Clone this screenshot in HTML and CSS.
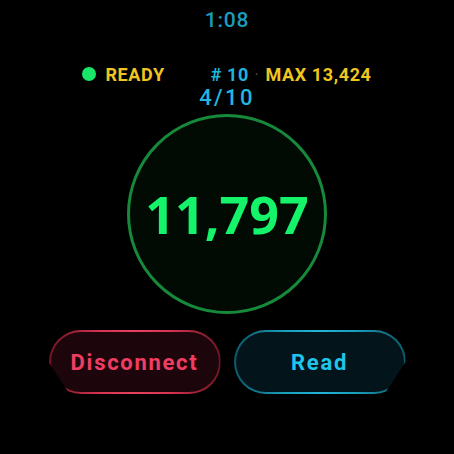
FILE: index.html
```html
<!DOCTYPE html>
<html>
<head>
<meta charset="utf-8">
<link rel="stylesheet" href="styles.css">
</head>
<body>
<div class="screen">
  <div class="time">1:08</div>
  <div class="status">
    <div class="group">
      <span class="dot"></span>
      <span class="ready">READY</span>
    </div>
    <div class="group right">
      <span class="num"># 10</span>
      <span class="sep">·</span>
      <span class="max">MAX 13,424</span>
    </div>
  </div>
  <div class="progress">4/10</div>
  <div class="ring">
    <span class="value">11,797</span>
  </div>
  <div class="actions">
    <button class="btn danger">Disconnect</button>
    <button class="btn primary">Read</button>
  </div>
</div>
</body>
</html>
```
FILE: styles.css
```css
html, body {
  margin: 0;
  padding: 0;
  background: #000;
}
.screen {
  width: 454px;
  height: 454px;
  display: flex;
  flex-direction: column;
  align-items: center;
  font-family: Roboto, "Liberation Sans", sans-serif;
}
.time {
  margin-top: 7px;
  height: 26px;
  line-height: 26px;
  font-size: 21px;
  font-weight: 500;
  color: #1c9dbd;
  letter-spacing: 0.8px;
}
.status {
  margin-top: 29px;
  height: 24px;
  display: flex;
  align-items: center;
  justify-content: center;
  gap: 46px;
  font-weight: 700;
  font-size: 18px;
  letter-spacing: 0.6px;
}
.group {
  display: flex;
  align-items: center;
}
.dot {
  width: 14px;
  height: 14px;
  border-radius: 50%;
  background: #19e567;
  margin-right: 9px;
}
.ready, .max {
  color: #efc521;
}
.num {
  color: #1eb4dc;
}
.sep {
  color: #555;
  font-size: 10px;
  margin: 0 7px 0 6px;
}
.progress {
  height: 24px;
  line-height: 24px;
  font-size: 22px;
  font-weight: 500;
  color: #22b6e0;
  letter-spacing: 2.4px;
}
.ring {
  margin-top: 4px;
  width: 194px;
  height: 194px;
  border: 3px solid #17893a;
  border-radius: 50%;
  background: #020a04;
  display: flex;
  align-items: center;
  justify-content: center;
}
.value {
  font-family: "Open Sans", sans-serif;
  font-weight: 700;
  font-size: 52px;
  color: #15f36a;
  line-height: 1;
}
.actions {
  margin-top: 16px;
  display: flex;
  gap: 13px;
}
.btn {
  display: block;
  width: 172px;
  height: 64px;
  border-radius: 32px;
  border: 2px solid transparent;
  font-family: Roboto, "Liberation Sans", sans-serif;
  font-weight: 700;
  font-size: 22px;
  letter-spacing: 1.7px;
  padding: 0;
}
.danger {
  color: #f03d63;
  background: linear-gradient(#1c060b, #1c060b) padding-box,
    linear-gradient(90deg, #6e1424 0%, #d93452 30%, #e8405c 50%, #d93452 70%, #6e1424 100%) border-box;
  clip-path: polygon(0 0, 100% 0, 100% 100%, 21px 100%, 0 50%);
}
.primary {
  color: #1fc6ea;
  background: linear-gradient(#03151b, #03151b) padding-box,
    linear-gradient(90deg, #0e5868 0%, #1a9fbd 30%, #22b4d6 50%, #1a9fbd 70%, #0e5868 100%) border-box;
  clip-path: polygon(0 0, 100% 0, 100% 50%, calc(100% - 21px) 100%, 0 100%);
}
```
